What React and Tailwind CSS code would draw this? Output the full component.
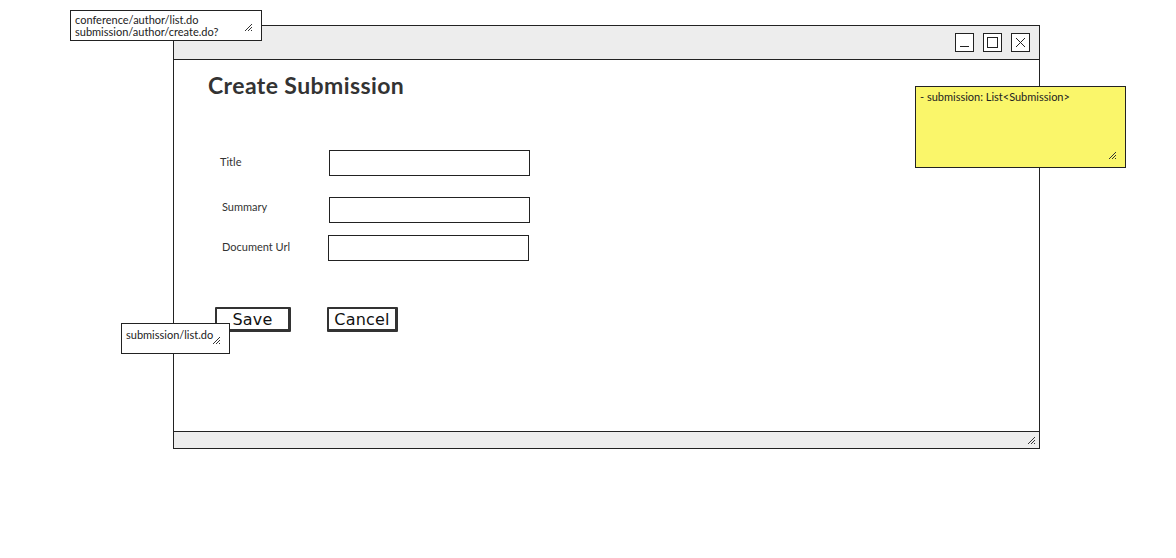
import React from "react";

const font = { fontFamily: "Lato, 'Noto Sans', sans-serif" };

const Grip = ({ className = "" }) => (
  <svg width="9" height="9" viewBox="0 0 9 9" className={className}>
    <path d="M1 8 L8 1 M4 8 L8 4 M7 8 L8 7" stroke="#333" strokeWidth="1" fill="none" />
  </svg>
);

const WinBtn = ({ children }) => (
  <div className="w-[19px] h-[19px] border border-[#222] bg-white flex items-center justify-center">
    {children}
  </div>
);

const Note = ({ className, children }) => (
  <div className={"absolute border border-[#222] text-[11px] leading-[12px] text-[#222] px-[4px] py-[3px] " + className}>
    {children}
  </div>
);

const SketchButton = ({ label, w }) => (
  <div className={"h-[25px] border-2 border-[#333] border-r-[3px] border-b-[3px] rounded-[1px] flex items-center justify-center pt-[2px] text-[16px] text-[#111] " + w}
    style={{ fontFamily: "'DejaVu Sans', sans-serif", letterSpacing: "0.2px" }}>
    {label}
  </div>
);

const App = () => {
  return (
    <div className="relative w-[1176px] h-[558px] bg-white overflow-hidden" style={font}>
      {/* window */}
      <div className="absolute left-[173px] top-[25px] w-[867px] h-[424px] border border-[#222] flex flex-col bg-white">
        <div className="h-[34px] bg-[#ededed] border-b border-[#222] flex items-center justify-end gap-[9px] pr-[9px]">
          <WinBtn>
            <div className="w-[9px] h-px bg-[#222] mt-[8px]" />
          </WinBtn>
          <WinBtn>
            <div className="w-[11px] h-[11px] border border-[#222]" />
          </WinBtn>
          <WinBtn>
            <svg width="11" height="11" viewBox="0 0 11 11">
              <path d="M1 1 L10 10 M10 1 L1 10" stroke="#222" strokeWidth="1" />
            </svg>
          </WinBtn>
        </div>

        <div className="flex-1">
          <h1 className="pl-[34px] pt-[12px] text-[23px] leading-[27px] font-bold text-[#333] tracking-[0.4px]">Create Submission</h1>

          <div className="flex items-center mt-[51px] text-[11px] text-[#333]">
            <span className="ml-[46px] w-[109px] -mt-[2px]">Title</span>
            <div className="w-[201px] h-[26px] border border-[#222]" />
          </div>
          <div className="flex items-center mt-[21px] text-[11px] text-[#333]">
            <span className="ml-[48px] w-[107px] -mt-[6px]">Summary</span>
            <div className="w-[201px] h-[26px] border border-[#222]" />
          </div>
          <div className="flex items-center mt-[12px] text-[11px] text-[#333]">
            <span className="ml-[48px] w-[106px] -mt-[2px]">Document Url</span>
            <div className="w-[201px] h-[26px] border border-[#222]" />
          </div>

          <div className="flex mt-[46px] ml-[41px] gap-[36px]">
            <SketchButton label="Save" w="w-[76px]" />
            <SketchButton label="Cancel" w="w-[71px]" />
          </div>
        </div>

        <div className="h-[17px] bg-[#ededed] border-t border-[#222] flex items-center justify-end pr-[3px]">
          <Grip />
        </div>
      </div>

      {/* notes */}
      <Note className="left-[70px] top-[10px] w-[192px] h-[31px] bg-white">
        <div>conference/author/list.do</div>
        <div>submission/author/create.do?</div>
        <Grip className="absolute right-[8px] bottom-[8px]" />
      </Note>

      <Note className="left-[121px] top-[323px] w-[109px] h-[31px] bg-white">
        <div className="pt-[2px]">submission/list.do</div>
        <Grip className="absolute right-[8px] bottom-[8px]" />
      </Note>

      <Note className="left-[915px] top-[86px] w-[211px] h-[82px] bg-[#faf66a]">
        <div className="pt-[1px]">- submission: List&lt;Submission&gt;</div>
        <Grip className="absolute right-[8px] bottom-[7px]" />
      </Note>
    </div>
  );
};

export default App;
